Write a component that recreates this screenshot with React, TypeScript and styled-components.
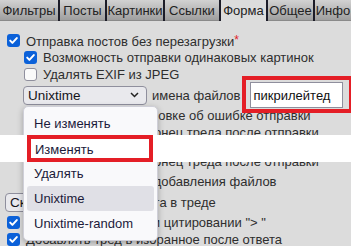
import * as React from 'react';
import styled, { createGlobalStyle } from 'styled-components';

const GlobalStyle = createGlobalStyle`
	html, body {
		margin: 0;
		padding: 0;
		background: #dcdcdc;
	}
	body {
		font-family: "Liberation Sans", Arial, sans-serif;
		overflow: hidden;
	}
`;

// tab widths taken from the separators in the settings header
const tabs = [
	{ name: 'Фильтры', w: 58 },
	{ name: 'Посты', w: 45 },
	{ name: 'Картинки', w: 56 },
	{ name: 'Ссылки', w: 54 },
	{ name: 'Форма', w: 45 },
	{ name: 'Общее', w: 45 },
	{ name: 'Инфо', w: 36 },
];
const nameOptions = ['Не изменять', 'Изменять', 'Удалять', 'Unixtime', 'Unixtime-random'];

const Chevron = () => (
	<svg width="9" height="6" viewBox="0 0 9 6">
		<path d="M1 1l3.5 3.5L8 1" fill="none" stroke="#222" strokeWidth="1.5" />
	</svg>
);

const Tick = () => (
	<svg width="11" height="11" viewBox="0 0 11 11">
		<path d="M2.2 5.6l2.2 2.3 4.4-4.8" fill="none" stroke="#fff" strokeWidth="2" strokeLinecap="round" strokeLinejoin="round" />
	</svg>
);

const CheckBox = ({ checked }: { checked: boolean }) => (
	<Box $checked={checked}>{checked && <Tick />}</Box>
);

export default function App() {
	return (
		<Page>
			<GlobalStyle />
			<TabBar>
				{tabs.map((t) => (
					<Tab key={t.name} $w={t.w} $active={t.name === 'Форма'}>{t.name}</Tab>
				))}
			</TabBar>

			<Content>
				<Row>
					<CheckBox checked />
					<Label>Отправка постов без перезагрузки<Star>*</Star></Label>
				</Row>
				<Row $sub>
					<CheckBox checked />
					<Label>Возможность отправки одинаковых картинок</Label>
				</Row>
				<Row $sub>
					<CheckBox checked={false} />
					<Label>Удалять EXIF из JPEG</Label>
				</Row>
				<SelectRow $sub>
					<SelectWrap $shift={-1}>
						<Select $width={124}>
							<span>Unixtime</span>
							<Chevron />
						</Select>
						<Menu>
							{nameOptions.map((o) => (
								<MenuItem key={o} $hover={o === 'Unixtime'}>{o}</MenuItem>
							))}
						</Menu>
					</SelectWrap>
					<InlineLabel>имена файлов</InlineLabel>
					<Frame>
						<TextInput>пикрилейтед</TextInput>
					</Frame>
				</SelectRow>
				<Row $sub>
					<CheckBox checked />
					<Label>Оповещать в заголовке об ошибке отправки</Label>
				</Row>
				<Row $sub>
					<CheckBox checked />
					<Label>Перемещаться в конец треда после отправки</Label>
				</Row>
				<Row $sub $gap={12}>
					<CheckBox checked />
					<Label>Перемещаться в конец треда после отправки</Label>
				</Row>
				<Row $sub $gap={3}>
					<CheckBox checked />
					<Label>Улучшенное поле добавления файлов</Label>
				</Row>
				<SelectRow>
					<SelectWrap $shift={-2}>
						<Select $width={73}>
							<span>Скрыть</span>
							<Chevron />
						</Select>
					</SelectWrap>
					<InlineLabel>Форма ответа в треде</InlineLabel>
				</SelectRow>
				<Row>
					<CheckBox checked />
					<Label>Вставлять пробел при цитировании "&gt; "</Label>
				</Row>
				<Row>
					<CheckBox checked />
					<Label>Добавлять тред в избранное после ответа</Label>
				</Row>
			</Content>

			<Band>
				<PickedItem>Изменять</PickedItem>
			</Band>
		</Page>
	);
}

const Page = styled.div`
	position: relative;
	width: 351px;
	height: 246px;
	overflow: hidden;
	background: #dcdcdc;
	color: #2e2e2e;
	font-size: 13px;
`;

const TabBar = styled.div`
	display: flex;
	height: 21px;
	margin-left: -2px;
	white-space: nowrap;
`;

const Tab = styled.div<{ $active?: boolean; $w: number }>`
	flex: none;
	display: flex;
	align-items: center;
	justify-content: center;
	width: ${(p) => p.$w}px;
	padding-bottom: 1px;
	border-left: 2px solid #1c1c28;
	font-size: 13px;
	color: #222;
	overflow: hidden;
	background: ${(p) => (p.$active ? '#dcdcdc' : 'linear-gradient(#d2d2d2, #9c9c9c)')};
	box-shadow: ${(p) => (p.$active ? 'none' : 'inset 0 -1px 0 #8a8a8a')};
`;

const Content = styled.div`
	display: flex;
	flex-direction: column;
	padding-top: 11px;
`;

const Row = styled.div<{ $sub?: boolean; $gap?: number }>`
	display: flex;
	align-items: center;
	height: 17px;
	padding-left: ${(p) => (p.$sub ? 24 : 7)}px;
	margin-top: ${(p) => p.$gap || 0}px;
	white-space: nowrap;
`;

const SelectRow = styled(Row)`
	height: 24px;
`;

const Box = styled.span<{ $checked: boolean }>`
	flex: none;
	display: flex;
	align-items: center;
	justify-content: center;
	box-sizing: border-box;
	width: 13px;
	height: 13px;
	margin-right: 6px;
	border-radius: 3px;
	background: ${(p) => (p.$checked ? '#0b61d9' : '#fafafa')};
	border: ${(p) => (p.$checked ? 'none' : '1.5px solid #8f8f9d')};
`;

const Label = styled.span`
	line-height: 17px;
`;

const Star = styled.span`
	color: #e0242a;
	vertical-align: 2px;
	font-size: 12px;
`;

const SelectWrap = styled.div<{ $shift: number }>`
	position: relative;
	margin-left: ${(p) => p.$shift}px;
`;

const Select = styled.div<{ $width: number }>`
	display: flex;
	align-items: center;
	justify-content: space-between;
	box-sizing: border-box;
	width: ${(p) => p.$width}px;
	height: 19px;
	padding: 0 7px 0 4px;
	border: 1px solid #8f8f9d;
	border-radius: 4px;
	background: #e9e9ed;
	color: #15141a;
	font-size: 13.5px;
`;

const Menu = styled.div`
	position: absolute;
	top: 20px;
	left: 0;
	z-index: 2;
	box-sizing: border-box;
	width: 135px;
	padding: 4px 3px;
	background: #f9f9fb;
	border: 1px solid #cfcfd8;
	border-radius: 5px;
	box-shadow: 0 2px 6px rgba(0, 0, 0, 0.28);
`;

const MenuItem = styled.div<{ $hover?: boolean }>`
	display: flex;
	align-items: center;
	height: 25px;
	padding-left: 7px;
	border-radius: 3px;
	background: ${(p) => (p.$hover ? '#e0e0e6' : 'transparent')};
	color: #1b1a3a;
	font-size: 13px;
`;

const InlineLabel = styled.span`
	margin-left: 5px;
`;

const Frame = styled.div`
	position: relative;
	margin-left: 9px;

	&::after {
		content: '';
		position: absolute;
		top: -6px;
		bottom: -5px;
		left: -8px;
		right: -10px;
		border: 4px solid #e41e26;
		pointer-events: none;
	}
`;

const TextInput = styled.div`
	box-sizing: border-box;
	display: flex;
	align-items: center;
	width: 93px;
	height: 26px;
	padding-left: 3px;
	background: #fff;
	border: 1px solid #8f8f9d;
	color: #111;
	font-size: 13px;
`;

const Band = styled.div`
	position: absolute;
	top: 135px;
	left: 0;
	right: 0;
	z-index: 3;
	height: 27px;
	display: flex;
	background: #fff;
`;

const PickedItem = styled.div`
	display: flex;
	align-items: center;
	box-sizing: border-box;
	width: 126px;
	height: 27px;
	margin-left: 27px;
	padding: 2px 0 0 4px;
	border: 4px solid #e41e26;
	color: #1b1a3a;
	font-size: 13px;
`;
